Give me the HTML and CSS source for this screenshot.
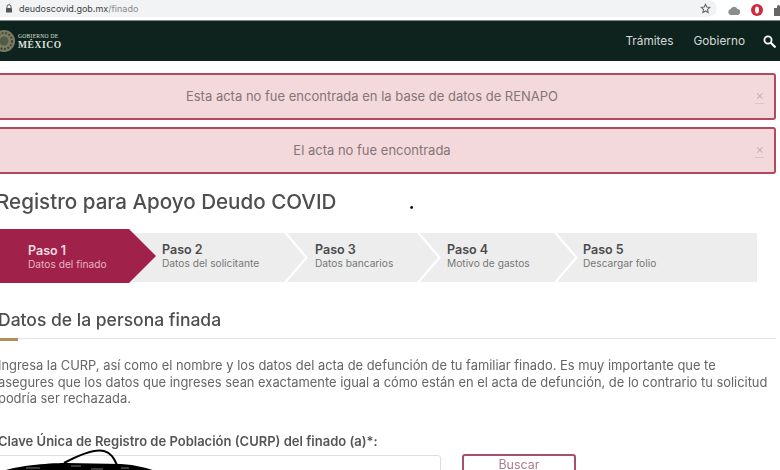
FILE: index.html
```html
<!doctype html>
<html>

<head>
    <meta name="viewport" content="width=device-width,initial-scale=1.0">
    <meta charset="utf-8" />
    <title>Registro para Apoyo Deudo COVID</title>
    <link rel="stylesheet" href="styles.css">
</head>

<body>
    <div class="shot">
        <div class="chrome">
            <div class="chrome__url">
                <svg class="chrome__lock" width="8" height="9" viewBox="0 0 8 9">
                    <path d="M2 4V2.7a2 2 0 0 1 4 0V4" fill="none" stroke="#555" stroke-width="1" />
                    <rect x="1" y="4" width="6" height="4.5" rx=".6" fill="#555" />
                </svg>
                <span>deudoscovid.gob.mx<span class="chrome__path">/finado</span></span>
                <svg class="chrome__star" width="11" height="11" viewBox="0 0 24 24">
                    <path d="M12 3l2.8 5.9 6.4.8-4.7 4.4 1.2 6.4L12 17.4l-5.7 3.1 1.2-6.4-4.7-4.4 6.4-.8z" fill="none" stroke="#666" stroke-width="2.4" />
                </svg>
            </div>
            <div class="chrome__icons">
                <svg width="12" height="10" viewBox="0 0 12 10">
                    <path d="M3 10a3 3 0 0 1-.4-5.9A3.6 3.6 0 0 1 9.4 4 3 3 0 0 1 9 10z" fill="#8a8d8f" />
                </svg>
                <svg width="12" height="12" viewBox="0 0 12 12">
                    <circle cx="6" cy="6" r="6" fill="#d3283a" />
                    <ellipse cx="6" cy="6" rx="2" ry="3.4" fill="#fff" />
                </svg>
                <svg width="11" height="11" viewBox="0 0 11 11">
                    <path d="M0 3h3V1.500a1.500 1.500 0 0 1 3 0V3h3v3h1.500a1.500 1.500 0 0 1 0 3H9v2H0z" fill="#666" />
                </svg>
            </div>
        </div>

        <nav class="navbar">
            <div class="brand">
                <svg class="brand__seal" width="24" height="24" viewBox="0 0 24 24">
                    <circle cx="12" cy="12" r="11" fill="#7d7c62" />
                    <circle cx="12" cy="12" r="8" fill="none" stroke="#3c4a3c" stroke-width="2" stroke-dasharray="2 1.500" />
                    <circle cx="12" cy="12" r="4.500" fill="#4f5c48" />
                </svg>
                <div class="brand__text">
                    <span class="brand__small">GOBIERNO DE</span>
                    <span class="brand__big">MÉXICO</span>
                </div>
            </div>
            <div class="navbar__links">
                <a>Trámites</a>
                <a>Gobierno</a>
                <svg class="navbar__search" width="13" height="13" viewBox="0 0 13 13">
                    <circle cx="5" cy="5" r="3.600" fill="none" stroke="#fff" stroke-width="1.800" />
                    <path d="M7.800 7.800l4 4" stroke="#fff" stroke-width="2.200" stroke-linecap="round" />
                </svg>
            </div>
        </nav>

        <main class="content">
            <div class="alert">Esta acta no fue encontrada en la base de datos de RENAPO<span class="alert__close">×</span></div>
            <div class="alert">El acta no fue encontrada<span class="alert__close">×</span></div>

            <h1 class="title">Registro para Apoyo Deudo COVID<span class="title__dot">.</span></h1>

            <div class="steps">
                <div class="step step--active"><b>Paso 1</b><span>Datos del finado</span></div>
                <div class="step step--2"><b>Paso 2</b><span>Datos del solicitante</span></div>
                <div class="step step--3"><b>Paso 3</b><span>Datos bancarios</span></div>
                <div class="step step--4"><b>Paso 4</b><span>Motivo de gastos</span></div>
                <div class="step step--5"><b>Paso 5</b><span>Descargar folio</span></div>
            </div>

            <h2 class="section">Datos de la persona finada</h2>
            <div class="section__rule"></div>

            <p class="intro">Ingresa la CURP, así como el nombre y los datos del acta de defunción de tu familiar finado. Es muy importante que te<br>asegures que los datos que ingreses sean exactamente igual a cómo están en el acta de defunción, de lo contrario tu solicitud<br>podría ser rechazada.</p>

            <label class="label">Clave Única de Registro de Población (CURP) del finado (a)*:</label>
            <div class="curp">
                <div class="curp__input">
                    <svg class="curp__scribble" width="170" height="24" viewBox="0 0 170 24">
                        <path d="M3 24C20 18 50 15 70 15L125 16C140 17 152 20 162 24z" fill="#000" />
                        <path d="M68 15C85 6 100 1 108 3 115 5 118 10 121 17" fill="none" stroke="#000" stroke-width="2" />
                        <path d="M30 20h14M75 18h10M95 21h12M125 20h8" stroke="#777" stroke-width="1" />
                    </svg>
                </div>
                <button class="curp__btn">Buscar</button>
            </div>
        </main>
    </div>
</body>

</html>
```

FILE: styles.css
```css
html,
body {
    margin: 0;
    height: 470px;
    overflow: hidden;
    background: #fff;
}

.shot {
    font-family: Inter, "Open Sans", sans-serif;
    color: #545454;
    filter: blur(.4px);
}

.chrome {
    display: flex;
    align-items: center;
    height: 20px;
    background: #fff;
    margin-bottom: 1px;
}

.chrome__url {
    display: flex;
    align-items: center;
    flex: 1;
    height: 17px;
    margin-top: -3px;
    padding: 0 6px 0 5px;
    background: #f1f3f4;
    border-radius: 0 9px 9px 0;
    font-size: 9px;
    color: #444;
}

.chrome__lock {
    margin-right: 6px;
}

.chrome__path {
    color: #888;
}

.chrome__star {
    margin-left: auto;
}

.chrome__icons {
    display: flex;
    align-items: center;
    gap: 11px;
    width: 72px;
    padding-left: 11px;
    box-sizing: border-box;
    flex: none;
    margin-right: -9px;
}

.navbar {
    display: flex;
    align-items: center;
    justify-content: space-between;
    height: 40px;
    padding-right: 4px;
    background: #0f231e;
    border-top: 1px solid #7d8a86;
    margin-top: -1px;
    box-sizing: content-box;
}

.brand {
    display: flex;
    align-items: center;
    margin-left: -8px;
}

.brand__seal {
    margin-right: 2px;
}

.brand__text {
    display: flex;
    flex-direction: column;
    font-family: "Liberation Serif", serif;
    color: #dfe2de;
}

.brand__small {
    font-size: 5.500px;
    letter-spacing: .3px;
    line-height: 7px;
}

.brand__big {
    font-size: 9.500px;
    font-weight: bold;
    letter-spacing: .6px;
    line-height: 10px;
}

.navbar__links {
    display: flex;
    align-items: center;
    gap: 20px;
    font-size: 11.800px;
    color: #d3dad7;
}

.navbar__search {
    margin-left: -2px;
}

.content {
    margin-left: -5px;
    width: 781px;
    padding-top: 12px;
}

.alert {
    position: relative;
    height: 43px;
    margin: 0 0 7px -27px;
    border: 2px solid #b04a5c;
    border-radius: 3px;
    background: #f3d9dc;
    text-align: center;
    font-size: 13px;
    line-height: 43px;
    color: #857577;
}

.alert__close {
    position: absolute;
    top: 0;
    right: 10px;
    font-size: 13px;
    color: #c4b2b4;
    border-bottom: 1px solid #d9c5c7;
    line-height: 16px;
    margin-top: 12px;
}

.title {
    margin: 16px 0 15px 1px;
    font-size: 20.600px;
    font-weight: 500;
    line-height: 24px;
    color: #4e4e4e;
}

.title__dot {
    margin-left: 72px;
    color: #111;
}

.steps {
    display: flex;
    align-items: center;
    height: 54px;
}

.step {
    display: flex;
    flex-direction: column;
    justify-content: center;
    flex: none;
    height: 49px;
    margin-top: 3px;
    padding-bottom: 4px;
    box-sizing: border-box;
    background: #ededed;
    font-size: 10.200px;
    line-height: 12px;
    color: #777;
    clip-path: polygon(0 0, calc(100% - 21px) 0, 100% 50%, calc(100% - 21px) 100%, 0 100%, 21px 50%);
}

.step b {
    font-size: 12.500px;
    font-weight: 600;
    line-height: 15px;
    color: #4a4a4a;
}

.step--active {
    width: 161px;
    height: 54px;
    margin-top: 0;
    padding-bottom: 0;
    padding-left: 33px;
    background: #a0214a;
    color: #e8b4c4;
    clip-path: polygon(0 0, calc(100% - 27px) 0, 100% 50%, calc(100% - 27px) 100%, 0 100%);
    position: relative;
    z-index: 1;
}

.step--active b {
    color: #f6dbe3;
}

.step--2 {
    width: 174px;
    margin-left: -25px;
    padding-left: 31px;
}

.step--3 {
    width: 151px;
    margin-left: -18px;
    padding-left: 28px;
}

.step--4 {
    width: 155px;
    margin-left: -18px;
    padding-left: 27px;
}

.step--5 {
    width: 200px;
    margin-left: -18px;
    padding-left: 26px;
    clip-path: polygon(0 0, 100% 0, 100% 100%, 0 100%, 21px 50%);
}

.section {
    margin: 27px 0 0 3px;
    font-size: 17.500px;
    font-weight: 500;
    line-height: 20px;
    color: #4e4e4e;
}

.section__rule {
    position: relative;
    height: 1px;
    margin-top: 8px;
    background: #e3e3e3;
}

.section__rule::after {
    content: "";
    position: absolute;
    top: 0;
    left: 0;
    width: 23px;
    height: 3px;
    background: #b38e5d;
}

.intro {
    margin: 19px 0 0 3px;
    font-size: 12.900px;
    line-height: 16.500px;
    color: #666;
    white-space: nowrap;
}

.label {
    display: block;
    margin: 26px 0 0 3px;
    font-size: 13px;
    font-weight: 600;
    line-height: 14px;
    color: #555;
}

.curp {
    display: flex;
    align-items: flex-start;
    gap: 21px;
    margin-top: 7px;
}

.curp__input {
    position: relative;
    width: 446px;
    height: 40px;
    border: 1px solid #ddd;
    border-radius: 3px;
    box-sizing: border-box;
}

.curp__scribble {
    position: absolute;
    top: -8px;
    left: 0;
}

.curp__btn {
    width: 114px;
    height: 34px;
    margin-top: -1px;
    border: 2px solid #a5516a;
    border-radius: 3px;
    background: #fff;
    font-family: inherit;
    font-size: 12.500px;
    color: #b07a8a;
    padding: 0 0 12px;
}
```
